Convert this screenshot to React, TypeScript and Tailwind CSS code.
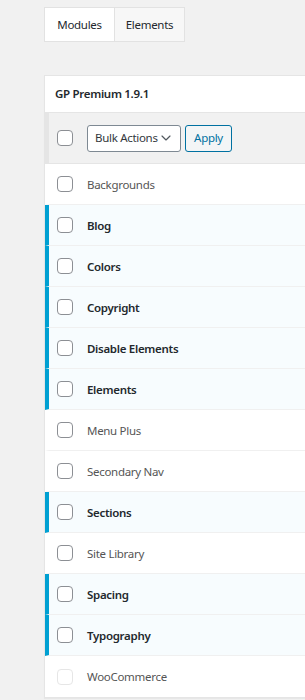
import { ChevronDown } from "lucide-react";

const modules = [
  { name: "Backgrounds", active: false },
  { name: "Blog", active: true },
  { name: "Colors", active: true },
  { name: "Copyright", active: true },
  { name: "Disable Elements", active: true },
  { name: "Elements", active: true },
  { name: "Menu Plus", active: false },
  { name: "Secondary Nav", active: false },
  { name: "Sections", active: true },
  { name: "Site Library", active: false },
  { name: "Spacing", active: true },
  { name: "Typography", active: true },
  { name: "WooCommerce", active: false, disabled: true },
];

function Checkbox({ disabled }: { disabled?: boolean }) {
  return (
    <span
      className={`block w-4 h-4 rounded-[4px] border bg-white ${
        disabled ? "border-[#e6e6e6]" : "border-[#8c8f94]"
      }`}
    />
  );
}

export default function App() {
  return (
    <div
      className="min-h-[700px] bg-[#f1f1f1] pl-11 pt-[7px] overflow-hidden tracking-[-0.3px]"
      style={{ fontFamily: '"Noto Sans", sans-serif' }}
    >
      <div className="flex w-fit border border-[#e2e2e2] text-[11.5px] text-[#23282d]">
        <div className="w-[70px] h-[33px] flex items-center justify-center bg-white border-r border-[#e2e2e2]">
          Modules
        </div>
        <div className="w-[69px] h-[33px] flex items-center justify-center bg-[#f7f7f7]">
          Elements
        </div>
      </div>

      <div className="mt-[33px] -mr-4 bg-white border border-[#e5e5e5] shadow-[0_1px_1px_rgba(0,0,0,0.04)]">
        <div className="h-[37px] flex items-center pl-[10px] text-[11.5px] font-semibold text-[#23282d] border-b border-[#e5e5e5]">
          GP Premium 1.9.1
        </div>
        <div className="h-[51px] flex items-center bg-[#f1f1f1] border-l-4 border-[#e5e5e5] border-b border-b-[#e5e5e5]">
          <div className="pl-[8px] w-[38px]">
            <Checkbox />
          </div>
          <div className="h-[27px] w-[94px] flex items-center justify-between whitespace-nowrap pl-[7px] pr-[6px] bg-white border border-[#7e8993] rounded-[3px] text-[11.5px] text-[#32373c]">
            Bulk Actions
            <ChevronDown className="w-4 h-4 text-[#50575e]" strokeWidth={1.75} />
          </div>
          <div className="ml-[4px] h-[27px] w-[47px] flex items-center justify-center bg-[#f3f5f6] border border-[#0071a1] rounded-[3px] text-[11.5px] text-[#0071a1]">
            Apply
          </div>
        </div>
        {modules.map((m) => (
          <div
            key={m.name}
            className={`h-[41px] flex items-center border-l-4 text-[11.5px] ${
              m.active
                ? "bg-[#f7fcfe] border-l-[#00a0d2] font-semibold text-[#23282d]"
                : "bg-white border-l-white text-[#555]"
            } border-b border-b-[#f0f0f0] last:border-b-0`}
          >
            <div className="pl-[8px] w-[38px]">
              <Checkbox disabled={m.disabled} />
            </div>
            <span className="pt-px">{m.name}</span>
          </div>
        ))}
      </div>
    </div>
  );
}
